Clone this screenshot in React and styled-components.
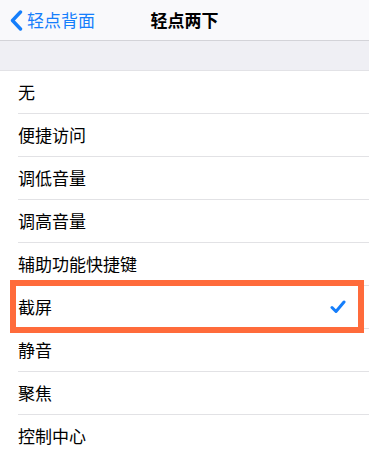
import React from "react";
import styled, { createGlobalStyle } from "styled-components";

const Global = createGlobalStyle`
  html, body { margin: 0; padding: 0; background: #ffffff; }
  body { font-family: "Noto Sans CJK SC", "Noto Sans", sans-serif; -webkit-font-smoothing: antialiased; }
`;

const Screen = styled.div`
  width: 369px;
  background: #ffffff;
  overflow: hidden;
`;

const NavBar = styled.header`
  height: 40px;
  background: #f9f9fb;
  border-bottom: 1px solid #d3d3d8;
  display: grid;
  grid-template-columns: 1fr auto 1fr;
  align-items: center;
`;

const Back = styled.div`
  display: flex;
  align-items: center;
  gap: 4px;
  padding-left: 10px;
  color: #157efb;
  font-size: 17px;
  line-height: 20px;
`;

const Title = styled.div`
  font-size: 17px;
  font-weight: 600;
  color: #000;
  line-height: 20px;
`;

const SectionGap = styled.div`
  height: 29px;
  background: #efeff4;
  border-bottom: 1px solid #e2e2e6;
`;

const List = styled.div`
  background: #fff;
`;

const Row = styled.div`
  position: relative;
  padding-left: 18px;
`;

const RowInner = styled.div`
  height: 42px;
  border-bottom: 1px solid #e2e2e5;
  display: flex;
  align-items: center;
  justify-content: space-between;
  padding-right: 23px;
`;

const Label = styled.span`
  font-size: 17px;
  color: #000;
  line-height: 20px;
`;

const Highlight = styled.div`
  position: absolute;
  left: 10px;
  top: -6px;
  width: 354px;
  height: 53px;
  border: 6px solid #ff6b3b;
  box-sizing: border-box;
  pointer-events: none;
`;

const Chevron = () => (
  <svg width="13" height="21" viewBox="0 0 13 21">
    <path d="M10.5 2 L2.5 10.5 L10.5 19" fill="none" stroke="#157efb" strokeWidth="3.4" strokeLinecap="round" strokeLinejoin="round" />
  </svg>
);

const Check = () => (
  <svg width="16" height="14" viewBox="0 0 16 14">
    <path d="M2 7.5 L6 11.5 L14 2" fill="none" stroke="#157efb" strokeWidth="3" strokeLinecap="round" strokeLinejoin="round" />
  </svg>
);

const items = ["无", "便捷访问", "调低音量", "调高音量", "辅助功能快捷键", "截屏", "静音", "聚焦", "控制中心"];
const selected = "截屏";

export default function App() {
  return (
    <>
      <Global />
      <Screen>
        <NavBar>
          <Back>
            <Chevron />
            <span>轻点背面</span>
          </Back>
          <Title>轻点两下</Title>
          <div />
        </NavBar>
        <SectionGap />
        <List>
          {items.map((it) => (
            <Row key={it}>
              <RowInner>
                <Label>{it}</Label>
                {it === selected && <Check />}
              </RowInner>
              {it === selected && <Highlight />}
            </Row>
          ))}
        </List>
      </Screen>
    </>
  );
}
